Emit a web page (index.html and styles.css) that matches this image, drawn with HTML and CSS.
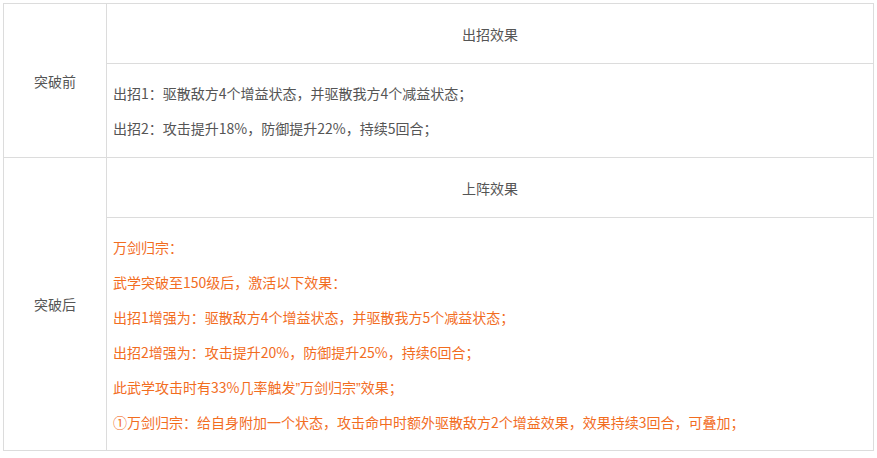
FILE: index.html
```html
<!DOCTYPE html>
<html lang="zh-CN">

<head>
    <meta charset="UTF-8">
    <meta name="viewport" content="width=device-width, initial-scale=1.0">
    <title>武学突破效果</title>
    <link rel="stylesheet" href="styles.css">
</head>

<body>
    <table class="effect-table">
        <tr>
            <td class="label" rowspan="2">突破前</td>
            <td class="head">出招效果</td>
        </tr>
        <tr>
            <td class="body">
                <p>出招1：驱散敌方4个增益状态，并驱散我方4个减益状态；</p>
                <p>出招2：攻击提升18%，防御提升22%，持续5回合；</p>
            </td>
        </tr>
        <tr>
            <td class="label" rowspan="2">突破后</td>
            <td class="head">上阵效果</td>
        </tr>
        <tr>
            <td class="body highlight">
                <p>万剑归宗：</p>
                <p>武学突破至150级后，激活以下效果：</p>
                <p>出招1增强为：驱散敌方4个增益状态，并驱散我方5个减益状态；</p>
                <p>出招2增强为：攻击提升20%，防御提升25%，持续6回合；</p>
                <p>此武学攻击时有33%几率触发<span class="q">”</span>万剑归宗<span class="q">”</span>效果；</p>
                <p>①万剑归宗：给自身附加一个状态，攻击命中时额外驱散敌方2个增益效果，效果持续3回合，可叠加；</p>
            </td>
        </tr>
    </table>
</body>

</html>
```

FILE: styles.css
```css
body {
    font-family: "Noto Sans CJK SC", "Noto Sans", sans-serif;
    font-size: 14px;
    margin: 0;
    padding: 0;
    background-color: #fff;
    color: #555;
}

.effect-table {
    border-collapse: collapse;
    margin: 3px;
    width: 871px;
    font-size: 14px;
}

.effect-table td {
    border: 1px solid #dcdcdc;
    padding: 0;
}

.label {
    width: 102px;
    text-align: center;
    vertical-align: middle;
}

.head {
    height: 59px;
    text-align: center;
    vertical-align: middle;
}

.body {
    padding: 12px 6px 11px !important;
}

.body p {
    margin: 0;
    line-height: 35px;
}

.highlight {
    color: #f26d1f;
    padding-bottom: 10px !important;
}

.q {
    font-family: "Liberation Sans", sans-serif;
    line-height: 1;
}
```
